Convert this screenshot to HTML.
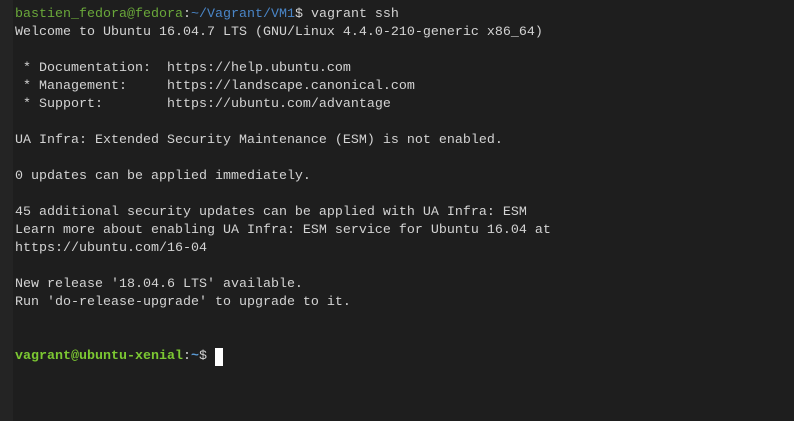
<!DOCTYPE html>
<html><head><meta charset="utf-8"><style>
html,body{margin:0;padding:0;}
body{width:794px;height:421px;background:#1e1e1e;overflow:hidden;position:relative;}
.strip{position:absolute;left:0;top:0;width:13px;height:421px;background:#242424;}
pre{position:absolute;left:15px;top:6px;margin:0;font-family:"Liberation Mono",monospace;font-size:13.33px;line-height:18px;color:#d3d3d3;}
.g{color:#6aa83a;}
.b{color:#4a86c8;}
.G{color:#7cc832;font-weight:bold;}
.B{color:#5b9bd5;font-weight:bold;}
.cur{display:inline-block;width:8px;height:18px;background:#fff;vertical-align:top;}
</style></head><body><div class="strip"></div><pre><span class="g">bastien_fedora@fedora</span>:<span class="b">~/Vagrant/VM1</span>$ vagrant ssh
Welcome to Ubuntu 16.04.7 LTS (GNU/Linux 4.4.0-210-generic x86_64)

 * Documentation:  https://help.ubuntu.com
 * Management:     https://landscape.canonical.com
 * Support:        https://ubuntu.com/advantage

UA Infra: Extended Security Maintenance (ESM) is not enabled.

0 updates can be applied immediately.

45 additional security updates can be applied with UA Infra: ESM
Learn more about enabling UA Infra: ESM service for Ubuntu 16.04 at
https://ubuntu.com/16-04

New release '18.04.6 LTS' available.
Run 'do-release-upgrade' to upgrade to it.


<span class="G">vagrant@ubuntu-xenial</span>:<span class="B">~</span>$ <span class="cur"></span></pre></body></html>
